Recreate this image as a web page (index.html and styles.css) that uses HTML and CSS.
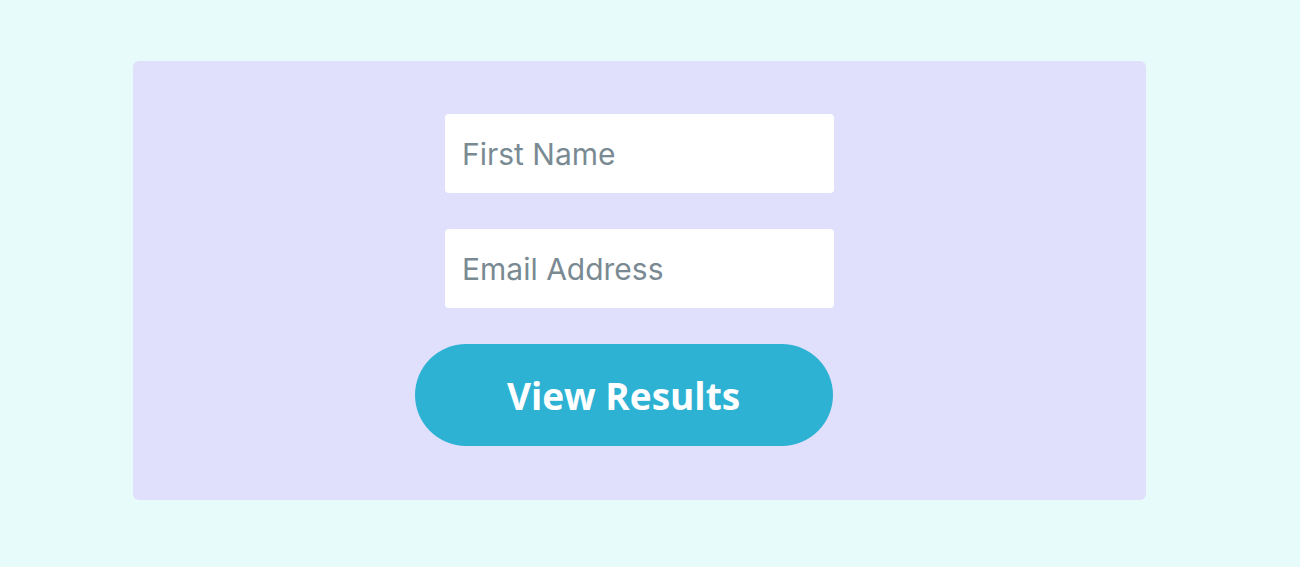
FILE: index.html
```html
<!DOCTYPE html>
<html lang="en">
<head>
<meta charset="UTF-8">
<meta name="viewport" content="width=device-width, initial-scale=1.0">
<title>Results</title>
<link rel="stylesheet" href="styles.css">
</head>
<body>
<div class="card">
    <form class="signup">
        <input type="text" class="field" placeholder="First Name">
        <input type="email" class="field" placeholder="Email Address">
        <button type="button" class="results-btn">View Results</button>
    </form>
</div>
</body>
</html>
```

FILE: styles.css
```css
body {
    margin: 0;
    padding: 61px 0 0 133px;
    background: #e8fbfb;
    font-family: 'Inter', sans-serif;
}

.card {
    width: 1013px;
    box-sizing: border-box;
    padding: 53px 0 54px;
    background: #e0dffc;
    border-radius: 6px;
}

.signup {
    display: flex;
    flex-direction: column;
    align-items: center;
    gap: 36px;
    margin: 0;
}

.field {
    width: 389px;
    height: 79px;
    box-sizing: border-box;
    padding: 0 17px;
    border: none;
    border-radius: 4px;
    background: #fff;
    font-family: 'Inter', sans-serif;
    font-size: 30px;
    color: #333;
    outline: none;
}

.field::placeholder {
    color: #7a8a93;
}

.results-btn {
    width: 418px;
    height: 102px;
    margin-right: 32px;
    border: none;
    border-radius: 51px;
    background: #2eb2d4;
    color: #fff;
    font-family: 'Open Sans', sans-serif;
    font-weight: 700;
    font-size: 37px;
    cursor: pointer;
}
```
